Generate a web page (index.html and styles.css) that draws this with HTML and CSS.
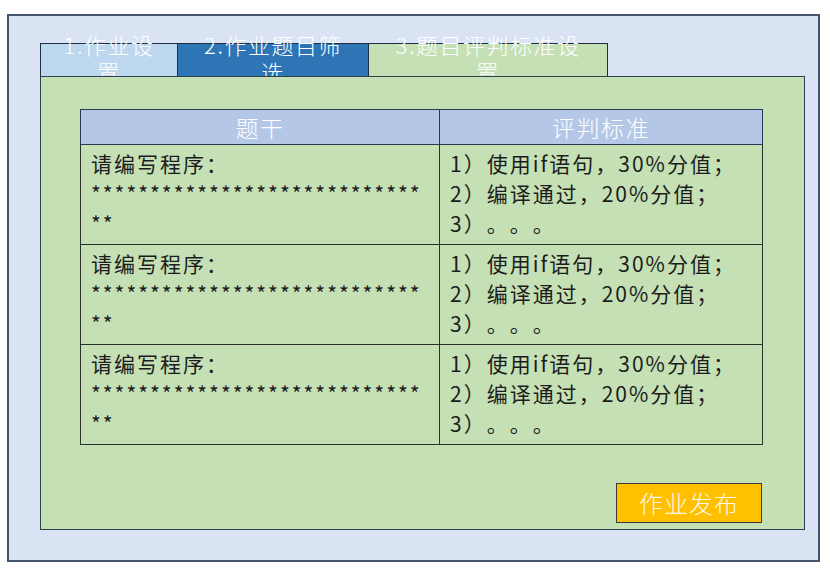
FILE: index.html
```html
<!DOCTYPE html>
<html lang="zh">
<head>
<meta charset="utf-8">
<link rel="stylesheet" href="styles.css">
</head>
<body>
<div class="frame">
  <div class="tabs">
    <div class="tab tab-1">1.作业设<br>置</div>
    <div class="tab tab-2">2.作业题目筛<br>选</div>
    <div class="tab tab-3">3.题目评判标准设<br>置</div>
  </div>
  <div class="panel">
    <table class="grid">
      <thead>
        <tr><th class="col-stem">题干</th><th class="col-rule">评判标准</th></tr>
      </thead>
      <tbody>
        <tr>
          <td>请编写程序：<br>****************************<br>**</td>
          <td>1）使用if语句，30%分值；<br>2）编译通过，20%分值；<br>3）。。。</td>
        </tr>
        <tr>
          <td>请编写程序：<br>****************************<br>**</td>
          <td>1）使用if语句，30%分值；<br>2）编译通过，20%分值；<br>3）。。。</td>
        </tr>
        <tr>
          <td>请编写程序：<br>****************************<br>**</td>
          <td>1）使用if语句，30%分值；<br>2）编译通过，20%分值；<br>3）。。。</td>
        </tr>
      </tbody>
    </table>
    <button class="publish">作业发布</button>
  </div>
</div>
</body>
</html>
```
FILE: styles.css
```css
html, body {
  margin: 0;
  padding: 0;
  background: #ffffff;
}

body {
  font-family: "Noto Sans CJK SC", "Noto Sans", sans-serif;
  text-spacing-trim: space-all;
}

.frame {
  margin: 14px 0 0 7px;
  width: 813px;
  height: 548px;
  box-sizing: border-box;
  background: #dae3f3;
  border: 2px solid #44546a;
  padding: 27px 13px 30px 31px;
  display: flex;
  flex-direction: column;
}

.tabs {
  display: flex;
  height: 33px;
  flex: none;
}

.tab {
  box-sizing: border-box;
  height: 33px;
  border: 1.5px solid #1f2f45;
  border-bottom: none;
  color: #ffffff;
  font-size: 22px;
  font-weight: 300;
  line-height: 27px;
  letter-spacing: 1.5px;
  text-align: center;
  display: flex;
  align-items: center;
  justify-content: center;
  padding-bottom: 4px;
  clip-path: inset(-40px -2px 0 -2px);
}

.tab-1 {
  width: 138px;
  background: #bdd7ee;
}

.tab-2 {
  width: 191px;
  background: #2e75b6;
  border-left: none;
}

.tab-3 {
  width: 239px;
  background: #c5e0b4;
  border-left: none;
}

.panel {
  flex: 1;
  background: #c5e0b4;
  border: 1.5px solid #2f4050;
  display: flex;
  flex-direction: column;
  padding: 32px 41px 6px 39px;
}

.grid {
  border-collapse: collapse;
  width: 680px;
  table-layout: fixed;
}

.grid th,
.grid td {
  border: 1.5px solid #2b3328;
}

.grid th {
  background: #b4c7e7;
  border-color: #2a3a55;
  color: #ffffff;
  font-weight: 300;
  font-size: 23px;
  letter-spacing: 1.5px;
  height: 34px;
  padding: 0;
  line-height: 30px;
}

.col-stem {
  width: 358px;
}

.col-rule {
  width: 322px;
}

.grid td {
  height: 100px;
  box-sizing: border-box;
  vertical-align: top;
  padding: 3px 8px 3px 10px;
  font-size: 21px;
  line-height: 30px;
  letter-spacing: 2px;
  color: #1c1c1c;
  white-space: nowrap;
  overflow: hidden;
}

.publish {
  margin-top: auto;
  align-self: flex-end;
  margin-right: 1px;
  width: 146px;
  height: 40px;
  background: #ffc000;
  border: 1.5px solid #3a3a3a;
  color: #fff8e6;
  font-family: inherit;
  font-size: 24px;
  font-weight: 300;
  letter-spacing: 1px;
  padding: 0;
  line-height: 36px;
}
```
